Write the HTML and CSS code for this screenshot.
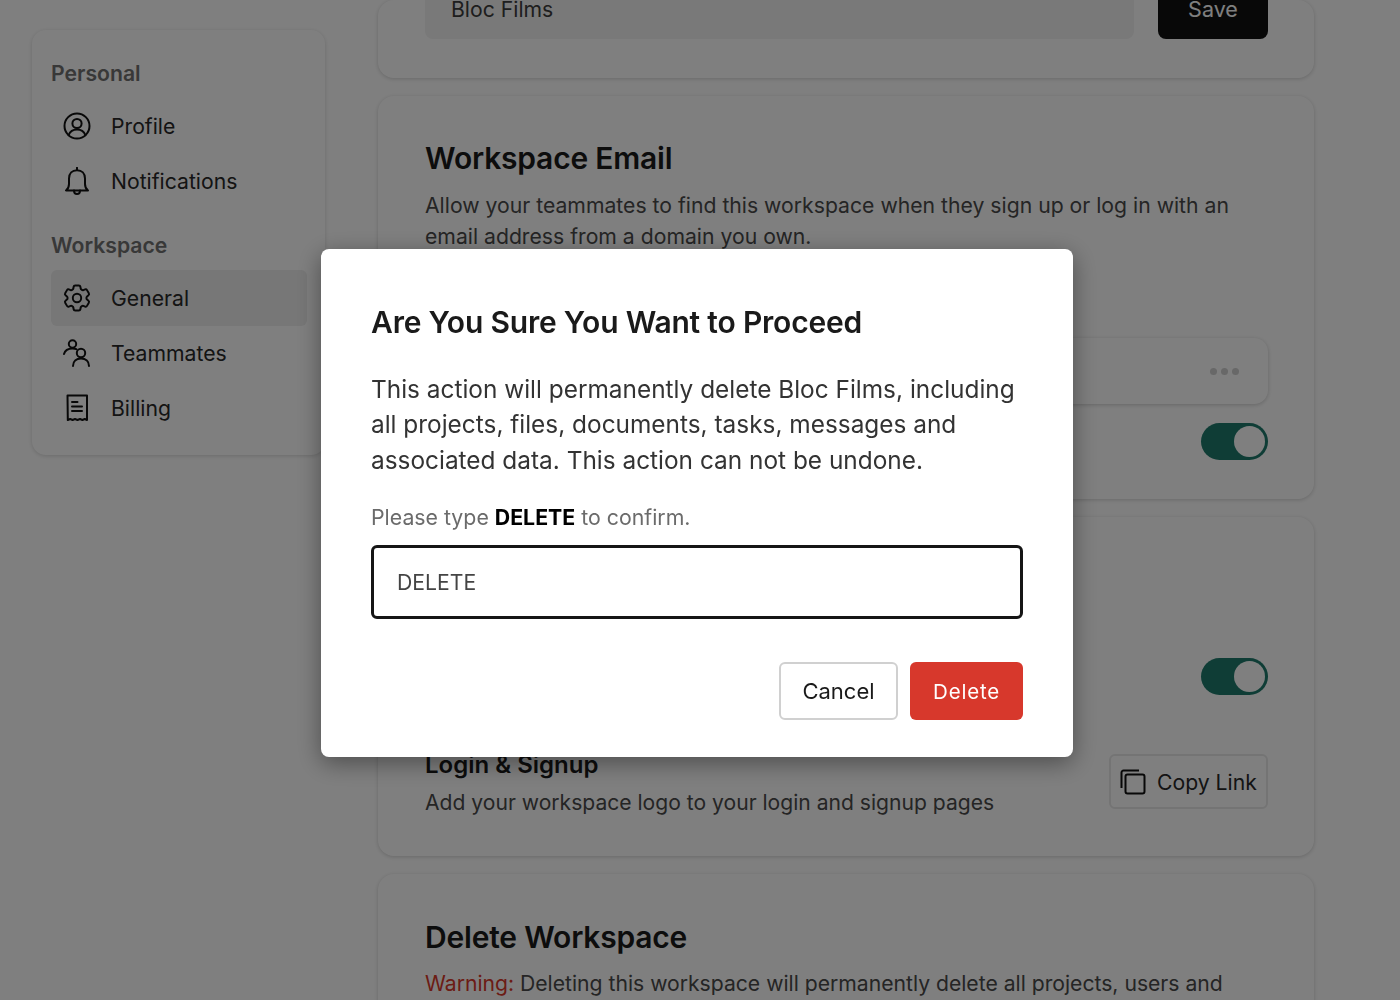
FILE: index.html
```html
<!DOCTYPE html>
<html lang="en">
<head>
<meta charset="utf-8">
<title>Workspace settings</title>
<link rel="stylesheet" href="styles.css">
</head>
<body>
<div class="page">
  <aside class="sidebar">
    <h3 class="side-label">Personal</h3>
    <a class="side-item"><svg class="side-icon" viewBox="0 0 28 28"><circle cx="14" cy="14" r="12.5"/><circle cx="14" cy="11.5" r="4.6"/><path d="M5.6 23.2c1.4-3.6 4.6-5.6 8.4-5.6s7 2 8.4 5.6"/></svg><span>Profile</span></a>
    <a class="side-item"><svg class="side-icon" viewBox="0 0 28 28"><path d="M14 .8v2.400M14 3.200c-4.800 0-8 3.300-8 8.300v5.400c0 3-1 5-3 6.600h22c-2-1.600-3-3.600-3-6.600v-5.400c0-5-3.200-8.300-8-8.300Z"/><path d="M11 23.500c0 2 1.300 3.500 3 3.500s3-1.500 3-3.500"/></svg><span>Notifications</span></a>
    <h3 class="side-label second">Workspace</h3>
    <a class="side-item active"><svg class="side-icon gear" viewBox="2 2 20 20"><path d="M9.594 3.94c.09-.542.56-.94 1.11-.94h2.593c.55 0 1.02.398 1.11.94l.213 1.281c.063.374.313.686.645.87.074.04.147.083.22.127.325.196.72.257 1.075.124l1.217-.456a1.125 1.125 0 0 1 1.37.49l1.296 2.247a1.125 1.125 0 0 1-.26 1.431l-1.003.827c-.293.241-.438.613-.43.992a7.723 7.723 0 0 1 0 .255c-.008.378.137.75.43.991l1.004.827c.424.35.534.955.26 1.43l-1.298 2.247a1.125 1.125 0 0 1-1.369.491l-1.217-.456c-.355-.133-.75-.072-1.076.124a6.47 6.47 0 0 1-.22.128c-.331.183-.581.495-.644.869l-.213 1.281c-.09.543-.56.94-1.11.94h-2.594c-.55 0-1.019-.398-1.11-.94l-.213-1.281c-.062-.374-.312-.686-.644-.87a6.52 6.52 0 0 1-.22-.127c-.325-.196-.72-.257-1.076-.124l-1.217.456a1.125 1.125 0 0 1-1.369-.49l-1.297-2.247a1.125 1.125 0 0 1 .26-1.431l1.004-.827c.292-.24.437-.613.43-.991a6.932 6.932 0 0 1 0-.255c.007-.38-.138-.751-.43-.992l-1.004-.827a1.125 1.125 0 0 1-.26-1.43l1.297-2.247a1.125 1.125 0 0 1 1.37-.491l1.216.456c.356.133.751.072 1.076-.124.072-.044.146-.086.22-.128.332-.183.582-.495.644-.869l.214-1.28Z"/><circle cx="12" cy="12" r="3"/></svg><span>General</span></a>
    <a class="side-item"><svg class="side-icon" viewBox="0 0 28 28"><circle cx="9.500" cy="5" r="3.700"/><path d="M1 15c.8-3 4-5.500 8.500-5.500 1.500 0 2.700.2 3.800.7"/><circle cx="18" cy="14" r="4.200"/><path d="M10 27c0-4.600 3.200-7.500 8-7.500s8 2.900 8 7.500"/></svg><span>Teammates</span></a>
    <a class="side-item"><svg class="side-icon" viewBox="0 0 28 28"><path d="M4.500 1.500h19.500v24.500l-2.200-1-2.400 1-2.400-1-2.500 1-2.500-1-2.400 1-2.400-1-2.400 1Z"/><path d="M9 8h5.500M9 12.500h10M9 17h10"/></svg><span>Billing</span></a>
  </aside>

  <main class="content">
    <section class="card card-name">
      <div class="name-row">
        <div class="name-input">Bloc Films</div>
        <button class="save-btn">Save</button>
      </div>
    </section>

    <section class="card card-email">
      <h2 class="card-title">Workspace Email</h2>
      <p class="card-text">Allow your teammates to find this workspace when they sign up or log in with an email address from a domain you own.</p>
      <div class="domain-box"><span class="dots"><i></i><i></i><i></i></span></div>
      <div class="toggle-row"><span class="toggle"></span></div>
    </section>

    <section class="card card-branding">
      <div class="toggle-row"><span class="toggle"></span></div>
      <div class="login-row">
        <div>
          <h4 class="row-title">Login &amp; Signup</h4>
          <p class="row-text">Add your workspace logo to your login and signup pages</p>
        </div>
        <button class="copy-btn"><svg class="copy-icon" viewBox="0 0 26 26"><path d="M1.500 19V3.500a2 2 0 0 1 2-2H19"/><rect x="5.500" y="5.500" width="19" height="19" rx="2"/></svg>Copy Link</button>
      </div>
    </section>

    <section class="card card-delete">
      <h2 class="card-title">Delete Workspace</h2>
      <p class="card-text"><span class="warning">Warning:</span> Deleting this workspace will permanently delete all projects, users and</p>
    </section>
  </main>
</div>

<div class="overlay">
  <div class="modal">
    <h2 class="modal-title">Are You Sure You Want to Proceed</h2>
    <p class="modal-text">This action will permanently delete Bloc Films, including all projects, files, documents, tasks, messages and associated data. This action can not be undone.</p>
    <p class="confirm-label">Please type <strong>DELETE</strong> to confirm.</p>
    <div class="confirm-input">DELETE</div>
    <div class="modal-actions">
      <button class="btn-cancel">Cancel</button>
      <button class="btn-delete">Delete</button>
    </div>
  </div>
</div>
</body>
</html>
```
FILE: styles.css
```css
* { box-sizing: border-box; }
html, body { margin: 0; height: 100%; overflow: hidden; }
body {
  background: #fff;
  color: #282828;
  font-family: Inter, "Liberation Sans", sans-serif;
}
h2, h3, h4, p { margin: 0; }
button { font-family: inherit; cursor: pointer; }

.page {
  display: flex;
  align-items: flex-start;
  height: 1000px;
  overflow: hidden;
  padding-left: 32px;
}

.sidebar {
  flex: none;
  width: 293px;
  height: 425px;
  margin-top: 30px;
  padding: 30px 19px 0;
  border-radius: 14px;
  background: #fff;
  box-shadow: 0 1px 4px rgba(0,0,0,.16);
}
.side-label {
  font-size: 21.200px;
  line-height: 26px;
  font-weight: 600;
  color: #707070;
  margin-bottom: 12px;
}
.side-label.second { margin-top: 24px; margin-bottom: 12px; }
.side-item {
  display: flex;
  align-items: center;
  gap: 20px;
  width: 256px;
  height: 55.200px;
  padding-left: 12px;
  border-radius: 6px;
  font-size: 21.200px;
  color: #282828;
}
.side-item.active { background: #eeeeee; }
.side-icon {
  flex: none;
  width: 28px;
  height: 28px;
  fill: none;
  stroke: #111;
  stroke-width: 2;
  stroke-linecap: round;
  stroke-linejoin: round;
}
.side-icon.gear { stroke-width: 1.400; }

.content {
  flex: none;
  width: 936px;
  margin-left: 53px;
  display: flex;
  flex-direction: column;
  gap: 18px;
}
.card {
  flex: none;
  background: #fff;
  border-radius: 16px;
  padding: 0 46px 0 47px;
  box-shadow: 0 1px 4px rgba(0,0,0,.18);
}
.card-name { height: 78px; }
.name-row {
  display: flex;
  gap: 24px;
  height: 39px;
}
.name-input {
  flex: 1;
  height: 39px;
  padding-left: 26px;
  background: #f2f2f2;
  border-radius: 0 0 8px 8px;
  font-size: 21.200px;
  line-height: 18px;
  color: #3c3c3c;
}
.save-btn {
  flex: none;
  width: 110px;
  height: 39px;
  padding: 0 0 21px;
  border: 0;
  border-radius: 0 0 8px 8px;
  background: #111;
  color: #fff;
  font-size: 21.500px;
  line-height: 18px;
}

.card-email { height: 403px; padding-top: 44px; }
.card-title {
  font-size: 30px;
  line-height: 36px;
  font-weight: 600;
  letter-spacing: -.2px;
  color: #1a1a1a;
}
.card-text {
  margin-top: 14px;
  font-size: 21.200px;
  line-height: 31px;
  color: #4a4a4a;
}
.warning { color: #d8382b; }
.card-delete { height: 200px; padding-top: 45px; }
.card-delete .card-text { margin-top: 13px; font-size: 21.150px; }
.domain-box {
  display: flex;
  align-items: center;
  justify-content: flex-end;
  height: 66px;
  margin-top: 86px;
  padding-right: 29px;
  border-radius: 14px;
  box-shadow: 0 1px 4px rgba(0,0,0,.2);
}
.dots { display: flex; gap: 4px; }
.dots i {
  width: 7px;
  height: 7px;
  border-radius: 50%;
  background: #d0d0d0;
}
.toggle-row {
  display: flex;
  justify-content: flex-end;
  margin-top: 19px;
}
.toggle {
  position: relative;
  width: 67px;
  height: 37px;
  border-radius: 19px;
  background: #1f7a6c;
}
.toggle::after {
  content: "";
  position: absolute;
  top: 3px;
  right: 3px;
  width: 31px;
  height: 31px;
  border-radius: 50%;
  background: #fff;
}

.card-branding { height: 339px; padding-top: 122px; }
.login-row {
  display: flex;
  justify-content: space-between;
  align-items: flex-start;
  margin-top: 59px;
}
.row-title {
  margin-top: -4px;
  font-size: 24px;
  line-height: 30px;
  font-weight: 600;
  color: #1a1a1a;
}
.row-text {
  margin-top: 9px;
  font-size: 21.100px;
  line-height: 28px;
  color: #4a4a4a;
}
.copy-btn {
  display: flex;
  align-items: center;
  gap: 11px;
  width: 159px;
  height: 55px;
  padding: 0 0 0 9px;
  border: 2px solid #e8e8e8;
  border-radius: 6px;
  background: #fff;
  color: #282828;
  font-size: 21.200px;
}
.copy-icon {
  flex: none;
  width: 26px;
  height: 26px;
  fill: none;
  stroke: #111;
  stroke-width: 2;
}

.overlay {
  position: fixed;
  inset: 0;
  background: rgba(0,0,0,.5);
}
.modal {
  position: absolute;
  left: 321px;
  top: 249px;
  width: 752px;
  height: 508px;
  padding: 53px 50px 0;
  background: #fff;
  border-radius: 8px;
  box-shadow: 0 6px 24px rgba(0,0,0,.4);
}
.modal-title {
  font-size: 30px;
  line-height: 40px;
  font-weight: 600;
  letter-spacing: -.2px;
  color: #1a1a1a;
}
.modal-text {
  margin-top: 30px;
  font-size: 24.400px;
  line-height: 35.400px;
  color: #333;
}
.confirm-label {
  margin-top: 24px;
  font-size: 21.300px;
  line-height: 30px;
  color: #6b6b6b;
}
.confirm-label strong { font-weight: 700; color: #000; }
.confirm-input {
  display: flex;
  align-items: center;
  height: 74px;
  margin-top: 13px;
  padding-left: 23px;
  border: 3px solid #151515;
  border-radius: 6px;
  font-size: 21.200px;
  color: #444;
}
.modal-actions {
  display: flex;
  justify-content: flex-end;
  gap: 12px;
  margin-top: 43px;
}
.btn-cancel, .btn-delete {
  height: 58px;
  border-radius: 6px;
  font-size: 22px;
}
.btn-cancel {
  width: 119px;
  border: 2px solid #d0d0d0;
  background: #fff;
  color: #1a1a1a;
}
.btn-delete {
  width: 113px;
  border: 0;
  background: #d7382c;
  color: #fff;
  font-size: 20.500px;
  letter-spacing: .8px;
}
```
